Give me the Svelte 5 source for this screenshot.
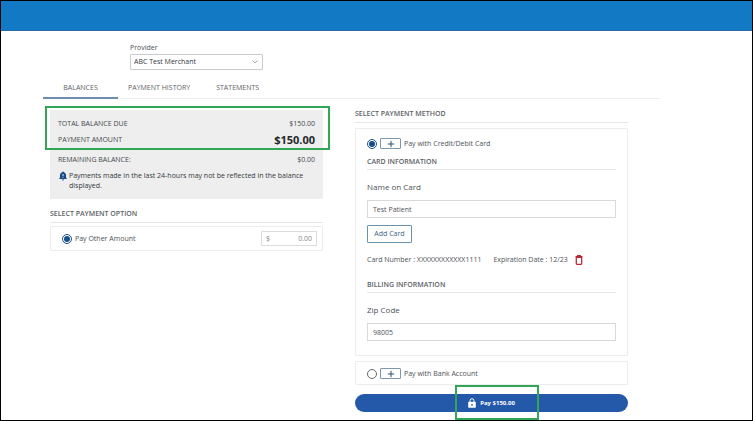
<script lang="ts">
  const tabs = ["BALANCES", "PAYMENT HISTORY", "STATEMENTS"];

  let activeTab = $state("BALANCES");
  let provider = $state("ABC Test Merchant");
  let method = $state("card");
  let option = $state("other");
  let otherAmount = $state("0.00");
  let nameOnCard = $state("Test Patient");
  let zipCode = $state("98005");
</script>

{#snippet plus()}
  <svg viewBox="0 0 8 8" width="8" height="8" aria-hidden="true">
    <path d="M4 0.8v6.4M0.8 4h6.4" fill="none" stroke="currentColor" stroke-width="1" />
  </svg>
{/snippet}

<div class="page">
  <header></header>

  <main>
    <div class="provider">
      <label for="provider">Provider</label>
      <div class="select">
        <select id="provider" bind:value={provider}>
          <option>ABC Test Merchant</option>
        </select>
        <svg viewBox="0 0 8 8" width="8" height="8" aria-hidden="true">
          <path d="M1.5 2.5L4 5l2.5-2.5" fill="none" stroke="#8a9298" stroke-width="0.8" />
        </svg>
      </div>
    </div>

    <nav>
      {#each tabs as tab}
        <button class="tab" class:active={tab === activeTab} onclick={() => (activeTab = tab)}>
          {tab}
        </button>
      {/each}
    </nav>

    <div class="columns">
      <section class="left">
        <div class="summary">
          <div class="totals">
            <div class="row">
              <span>TOTAL BALANCE DUE</span>
              <span>$150.00</span>
            </div>
            <div class="row">
              <span>PAYMENT AMOUNT</span>
              <strong>$150.00</strong>
            </div>
            <div class="highlight"></div>
          </div>
          <div class="remaining">
            <div class="row">
              <span>REMAINING BALANCE:</span>
              <span>$0.00</span>
            </div>
            <div class="notice">
              <svg viewBox="0 0 8 10" width="8" height="10" aria-hidden="true">
                <path
                  d="M4 0.4c0.6 0 0.9 0.4 0.9 0.9C6.3 1.7 7 2.9 7 4.3v2.3l0.8 0.9v0.6H0.2V7.5L1 6.6V4.3c0-1.4 0.7-2.6 2.1-3C3.1 0.8 3.4 0.4 4 0.4zM3 8.6h2c0 0.6-0.4 1-1 1s-1-0.4-1-1z"
                  fill="#144a86"
                />
                <path d="M4 2.9v2.2M4 5.8v0.9" stroke="#fff" stroke-width="0.9" />
              </svg>
              <p>Payments made in the last 24-hours may not be reflected in the balance displayed.</p>
            </div>
          </div>
        </div>

        <h2>SELECT PAYMENT OPTION</h2>
        <div class="box choice">
          <label>
            <input type="radio" name="option" value="other" bind:group={option} />
            <span>Pay Other Amount</span>
          </label>
          <div class="money">
            <span>$</span>
            <input type="text" aria-label="Other amount" bind:value={otherAmount} />
          </div>
        </div>
      </section>

      <section class="right">
        <h2>SELECT PAYMENT METHOD</h2>
        <div class="box card">
          <div class="method">
            <input id="pay-card" type="radio" name="method" value="card" bind:group={method} />
            <button class="expand" aria-label="Expand card">{@render plus()}</button>
            <label for="pay-card">Pay with Credit/Debit Card</label>
          </div>

          <h3>CARD INFORMATION</h3>
          <label class="field" for="name">Name on Card</label>
          <input class="text" id="name" type="text" bind:value={nameOnCard} />
          <button class="add">Add Card</button>

          <div class="saved">
            <span>Card Number : XXXXXXXXXXXX1111</span>
            <span>Expiration Date : 12/23</span>
            <button class="delete" aria-label="Delete card">
              <svg viewBox="0 0 8 10" width="8" height="10" aria-hidden="true">
                <path
                  d="M0.5 1.6h7M2.7 1.4V0.7h2.6v0.7M1.3 2.4v6.2c0 0.4 0.2 0.7 0.6 0.7h4.2c0.4 0 0.6-0.3 0.6-0.7V2.4z"
                  fill="none"
                  stroke="#c0283a"
                  stroke-width="1.3"
                />
              </svg>
            </button>
          </div>

          <h3>BILLING INFORMATION</h3>
          <label class="field" for="zip">Zip Code</label>
          <input class="text" id="zip" type="text" bind:value={zipCode} />
        </div>

        <div class="box bank">
          <div class="method">
            <input id="pay-bank" type="radio" name="method" value="bank" bind:group={method} />
            <button class="expand" aria-label="Expand bank account">{@render plus()}</button>
            <label for="pay-bank">Pay with Bank Account</label>
          </div>
        </div>

        <button class="pay">
          <svg viewBox="0 0 8 10" width="8" height="10" aria-hidden="true">
            <path d="M2 4.2V2.7a2 2 0 0 1 4 0v1.5" fill="none" stroke="#fff" stroke-width="1" />
            <rect x="0.2" y="3.8" width="7.6" height="6" rx="0.8" fill="#fff" />
            <circle cx="4" cy="6.8" r="0.9" fill="#2458a8" />
          </svg>
          Pay $150.00
          <span class="highlight"></span>
        </button>
      </section>
    </div>
  </main>
</div>

<style>
  :global(body) {
    margin: 0;
    background: #fff;
  }

  .page {
    box-sizing: border-box;
    min-height: 100vh;
    border: 1px solid #000;
    font-family: "Open Sans", sans-serif;
    font-size: 7px;
    line-height: 10px;
    color: #4d5256;
  }

  .page *,
  .page *::before {
    box-sizing: border-box;
  }

  button,
  input,
  select {
    margin: 0;
    font: inherit;
    color: inherit;
  }

  button {
    padding: 0;
    border: 0;
    background: none;
  }

  svg {
    display: block;
    flex: none;
  }

  header {
    height: 30px;
    background: #127ac5;
    border-bottom: 1px solid #2c6ca6;
  }

  main {
    padding: 12px 92px 7px 42px;
  }

  .provider {
    width: 133px;
    margin-left: 87px;
  }

  .provider label {
    display: block;
  }

  .select {
    display: grid;
    align-items: center;
    margin-top: 1px;
  }

  .select select,
  .select svg {
    grid-area: 1 / 1;
  }

  .select select {
    height: 16px;
    padding: 0 3px;
    border: 1px solid #c9cbcd;
    border-radius: 1px;
    background: #fff;
    color: #33383c;
    appearance: none;
  }

  .select svg {
    justify-self: end;
    margin-right: 4px;
    pointer-events: none;
  }

  nav {
    display: flex;
    margin-top: 8px;
    border-bottom: 1px solid #ededed;
  }

  .tab {
    min-width: 75px;
    height: 21px;
    margin-bottom: -1px;
    padding: 0 10px;
    border-bottom: 2px solid transparent;
    color: #5d6266;
  }

  .tab.active {
    border-color: #6d8fac;
  }

  .columns {
    display: grid;
    grid-template-columns: 1fr 1fr;
    gap: 32px;
    padding: 0 32px 0 7px;
  }

  .left {
    padding-top: 11px;
  }

  .right {
    padding-top: 10px;
  }

  .summary {
    background: #eee;
    color: #44494d;
  }

  .totals {
    position: relative;
    padding: 6px 8px 1px;
    border-bottom: 1px solid #ddd;
  }

  .row {
    display: flex;
    align-items: center;
    justify-content: space-between;
    height: 16px;
  }

  .row strong {
    font-size: 11px;
    color: #25292c;
  }

  .highlight {
    position: absolute;
    border: 2px solid #32a556;
    pointer-events: none;
  }

  .totals .highlight {
    inset: -4px -7px -1px -5px;
  }

  .remaining {
    padding: 2px 8px 8px;
  }

  .notice {
    display: flex;
    gap: 2px;
    padding: 3px 8px 0 1px;
    color: #33383c;
  }

  .notice p {
    margin: 0;
  }

  h2,
  h3 {
    margin: 0;
    font-size: 7px;
    font-weight: 600;
    color: #5d6266;
    border-bottom: 1px solid #e6e6e6;
  }

  h2 {
    height: 14px;
  }

  .left h2 {
    margin-top: 10px;
  }

  .box {
    border: 1px solid #ececec;
    border-radius: 1px;
  }

  .choice {
    display: flex;
    align-items: center;
    justify-content: space-between;
    height: 25px;
    margin-top: 3px;
    padding: 0 5px 0 11px;
  }

  .choice label {
    display: flex;
    align-items: center;
    gap: 3px;
  }

  input[type="radio"] {
    display: grid;
    place-items: center;
    width: 10px;
    height: 10px;
    border: 1px solid #666b70;
    border-radius: 50%;
    background: #fff;
    appearance: none;
  }

  input[type="radio"]:checked {
    border-color: #1d5187;
  }

  input[type="radio"]:checked::before {
    content: "";
    width: 6px;
    height: 6px;
    border-radius: 50%;
    background: #174f8a;
  }

  .money {
    display: flex;
    align-items: center;
    width: 56px;
    height: 15px;
    padding: 0 4px;
    border: 1px solid #dcdcdc;
    color: #888;
  }

  .money input {
    width: 100%;
    padding: 0;
    border: 0;
    background: none;
    text-align: right;
  }

  .card {
    margin-top: 5px;
    padding: 9px 11px 14px;
  }

  .method {
    display: flex;
    align-items: center;
    gap: 3px;
  }

  .expand {
    display: grid;
    place-items: center;
    width: 21px;
    height: 11px;
    border: 1px solid #7d97ae;
    border-radius: 1px;
    color: #2d5272;
  }

  h3 {
    height: 13px;
    margin-top: 8px;
  }

  .field {
    display: block;
    margin-top: 12px;
    font-size: 8px;
  }

  .text {
    display: block;
    width: 100%;
    height: 18px;
    margin-top: 8px;
    padding: 0 5px;
    border: 1px solid #d9d9d9;
    background: #fff;
  }

  .add {
    display: block;
    width: 45px;
    height: 18px;
    margin-top: 7px;
    border: 1px solid #6b93ad;
    border-radius: 1px;
    color: #3a6382;
  }

  .saved {
    display: flex;
    align-items: center;
    gap: 12px;
    margin: 12px 0 15px;
  }

  .delete {
    margin-left: -5px;
  }

  .bank {
    height: 24px;
    margin-top: 5px;
    padding: 6px 11px;
  }

  .pay {
    position: relative;
    display: flex;
    align-items: center;
    justify-content: center;
    gap: 4px;
    width: 100%;
    height: 18px;
    margin-top: 9px;
    border-radius: 9px;
    background: #2458a8;
    font-size: 6px;
    font-weight: 700;
    color: #fff;
  }

  .pay .highlight {
    width: 84px;
    inset: -9px auto -8px 100px;
  }
</style>
